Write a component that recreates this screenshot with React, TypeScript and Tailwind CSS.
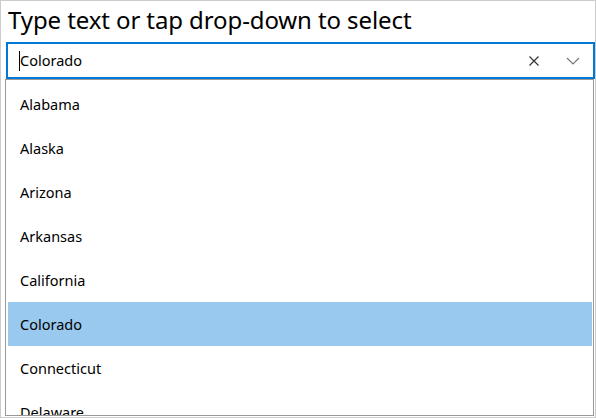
import React from "react";

const states = ["Alabama", "Alaska", "Arizona", "Arkansas", "California", "Colorado", "Connecticut", "Delaware", "Florida"];

export default function App() {
  return (
    <div
      className="w-[596px] h-[418px] border border-[#cccccc] bg-white overflow-hidden flex flex-col"
      style={{ fontFamily: '"Segoe UI", "Noto Sans", sans-serif' }}
    >
      <div className="pl-[7px] pt-[1px] h-[41px] text-[24px] leading-[36px] tracking-[-0.1px] text-[#000000]">
        Type text or tap drop-down to select
      </div>
      <div className="ml-[5px] mr-[0px] h-[37px] border-2 border-[#0078d7] flex items-center">
        <div className="flex-1 flex items-center pl-[11px]">
          <span className="w-px h-[20px] bg-black" />
          <span className="text-[14.5px] text-[#000000]">Colorado</span>
        </div>
        <svg width="12" height="12" viewBox="0 0 12 12" className="mr-[26px]">
          <path d="M1.5 1.5 L10.5 10.5 M10.5 1.5 L1.5 10.5" stroke="#333" strokeWidth="1.2" fill="none" />
        </svg>
        <svg width="14" height="8" viewBox="0 0 14 8" className="mr-[13px]">
          <path d="M1 1 L7 7 L13 1" stroke="#777" strokeWidth="1.2" fill="none" />
        </svg>
      </div>
      <div className="ml-[4px] mr-[1px] flex-1 border border-[#999999] pt-[2px] pl-[2px] pr-[1px] overflow-hidden">
        {states.map((s) => (
          <div
            key={s}
            className={
              "h-[44px] flex items-center pl-[12px] pt-[1px] text-[14.5px] text-[#000000] " +
              (s === "Colorado" ? "bg-[#99c9ef]" : "")
            }
          >
            {s}
          </div>
        ))}
      </div>
      <div className="h-[1px]" />
    </div>
  );
}
